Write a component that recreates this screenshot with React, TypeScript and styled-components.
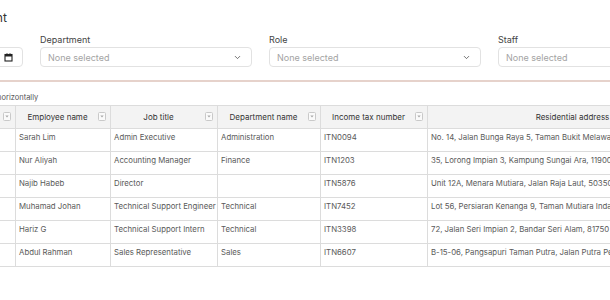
import React from 'react';
import styled, { createGlobalStyle } from 'styled-components';
import { ChevronDown } from 'lucide-react';

const GlobalStyle = createGlobalStyle`
  html, body {
    margin: 0;
    padding: 0;
    overflow: hidden;
    background: #fff;
  }
  body {
    font-family: Inter, "Noto Sans", sans-serif;
    color: #333;
  }
`;

type Employee = {
  no: number;
  id: string;
  name: string;
  title: string;
  department: string;
  taxNumber: string;
  address: string;
};

const employees: Employee[] = [
  {
    no: 1,
    id: 'EMP-0001',
    name: 'Sarah Lim',
    title: 'Admin Executive',
    department: 'Administration',
    taxNumber: 'ITN0094',
    address: 'No. 14, Jalan Bunga Raya 5, Taman Bukit Melawati, 45000 Kuala Selangor, Selangor',
  },
  {
    no: 2,
    id: 'EMP-0002',
    name: 'Nur Aliyah',
    title: 'Accounting Manager',
    department: 'Finance',
    taxNumber: 'ITN1203',
    address: '35, Lorong Impian 3, Kampung Sungai Ara, 11900 Bayan Lepas, Pulau Pinang',
  },
  {
    no: 3,
    id: 'EMP-0003',
    name: 'Najib Habeb',
    title: 'Director',
    department: '',
    taxNumber: 'ITN5876',
    address: 'Unit 12A, Menara Mutiara, Jalan Raja Laut, 50350 Kuala Lumpur',
  },
  {
    no: 4,
    id: 'EMP-0004',
    name: 'Muhamad Johan',
    title: 'Technical Support Engineer',
    department: 'Technical',
    taxNumber: 'ITN7452',
    address: 'Lot 56, Persiaran Kenanga 9, Taman Mutiara Indah, 31400 Ipoh, Perak',
  },
  {
    no: 5,
    id: 'EMP-0005',
    name: 'Hariz G',
    title: 'Technical Support Intern',
    department: 'Technical',
    taxNumber: 'ITN3398',
    address: '72, Jalan Seri Impian 2, Bandar Seri Alam, 81750 Masai, Johor',
  },
  {
    no: 6,
    id: 'EMP-0006',
    name: 'Abdul Rahman',
    title: 'Sales Representative',
    department: 'Sales',
    taxNumber: 'ITN6607',
    address: 'B-15-06, Pangsapuri Taman Putra, Jalan Putra Permai, 43300 Seri Kembangan',
  },
];

const columns = [
  { key: 'no', label: 'No.', width: 44 },
  { key: 'id', label: 'Employee ID', width: 160 },
  { key: 'name', label: 'Employee name', width: 95 },
  { key: 'title', label: 'Job title', width: 107 },
  { key: 'department', label: 'Department name', width: 103 },
  { key: 'taxNumber', label: 'Income tax number', width: 107 },
  { key: 'address', label: 'Residential address', width: 290 },
] as const;

function FilterIcon() {
  return (
    <svg width="8" height="9" viewBox="0 0 8 9">
      <rect x="0.5" y="0.5" width="7" height="8" rx="1" fill="#fafafa" stroke="#c9c9c9" />
      <path d="M2.3 3.4 L5.7 3.4 L4 5.4 Z" fill="#a9a9a9" />
    </svg>
  );
}

function CalendarIcon() {
  return (
    <svg width="9" height="9" viewBox="0 0 9 9">
      <rect x="1" y="1.5" width="7" height="6.5" fill="none" stroke="#222" strokeWidth="1.1" />
      <rect x="1" y="1.5" width="7" height="2" fill="#222" />
      <rect x="2.5" y="0.3" width="1" height="1.5" fill="#222" />
      <rect x="5.5" y="0.3" width="1" height="1.5" fill="#222" />
    </svg>
  );
}

export default function App() {
  return (
    <>
      <GlobalStyle />
      <Page>
        <Title>Employee Income Tax Assignment</Title>
        <Filters>
          <Field>
            <Label>Pay period</Label>
            <Input>
              <Placeholder>mm/yyyy</Placeholder>
              <CalendarIcon />
            </Input>
          </Field>
          <Field>
            <Label>Department</Label>
            <Input>
              <Placeholder>None selected</Placeholder>
              <ChevronDown size={9} color="#444" strokeWidth={2} />
            </Input>
          </Field>
          <Field>
            <Label>Role</Label>
            <Input>
              <Placeholder>None selected</Placeholder>
              <ChevronDown size={9} color="#444" strokeWidth={2} />
            </Input>
          </Field>
          <Field>
            <Label>Staff</Label>
            <Input>
              <Placeholder>None selected</Placeholder>
              <ChevronDown size={9} color="#444" strokeWidth={2} />
            </Input>
          </Field>
          <Field>
            <Label>Status</Label>
            <Input>
              <Placeholder>None selected</Placeholder>
              <ChevronDown size={9} color="#444" strokeWidth={2} />
            </Input>
          </Field>
        </Filters>
        <Hint>Showing 6 of 6 employees. Use shift+scroll to move horizontally</Hint>
        <Table>
          <colgroup>
            {columns.map((c) => (
              <col key={c.key} style={{ width: c.width }} />
            ))}
          </colgroup>
          <thead>
            <tr>
              {columns.map((c) => (
                <Th key={c.key} $filter={c.key !== 'address'}>
                  {c.label}
                  {c.key !== 'address' && (
                    <FilterSlot>
                      <FilterIcon />
                    </FilterSlot>
                  )}
                </Th>
              ))}
            </tr>
          </thead>
          <tbody>
            {employees.map((e) => (
              <tr key={e.id}>
                <Td>{e.no}</Td>
                <Td>{e.id}</Td>
                <Td>{e.name}</Td>
                <Td>{e.title}</Td>
                <Td>{e.department}</Td>
                <Td>{e.taxNumber}</Td>
                <Td>{e.address}</Td>
              </tr>
            ))}
          </tbody>
        </Table>
      </Page>
    </>
  );
}

const Page = styled.div`
  margin-left: -205px;
  padding: 9px 16px 8px;
  width: max-content;
`;

const Title = styled.h1`
  margin: 0 0 7px;
  font-size: 12.1px;
  line-height: 18px;
  font-weight: 400;
  color: #333;
`;

const Filters = styled.div`
  display: grid;
  grid-template-columns: repeat(5, 212px);
  column-gap: 17px;
  padding-bottom: 13px;
  border-bottom: 2px solid #e6d2cb;
`;

const Field = styled.div`
  display: flex;
  flex-direction: column;
  gap: 1px;
`;

const Label = styled.label`
  font-size: 9px;
  line-height: 12px;
  color: #444;
`;

const Input = styled.div`
  box-sizing: border-box;
  height: 20px;
  display: flex;
  align-items: center;
  justify-content: space-between;
  padding: 0 9px 0 7px;
  border: 1px solid #e2e2e2;
  border-radius: 4px;
  background: #fff;
`;

const Placeholder = styled.span`
  font-size: 9px;
  color: #a3a3a3;
`;

const Hint = styled.div`
  margin-top: 11px;
  margin-bottom: 2px;
  font-size: 7.5px;
  line-height: 10px;
  color: #555;
`;

const Table = styled.table`
  table-layout: fixed;
  border-collapse: collapse;
  width: 906px;
  border-top: 1px solid #dcdcdc;
  border-bottom: 1px solid #dcdcdc;
`;

const Th = styled.th<{ $filter: boolean }>`
  position: relative;
  box-sizing: border-box;
  height: 23px;
  padding: ${(p) => (p.$filter ? '0 11px 0 0' : '0')};
  background: #f3f3f3;
  border: 1px solid #dcdcdc;
  border-top: none;
  font-size: 8px;
  font-weight: 400;
  color: #333;
  text-align: center;
  white-space: nowrap;
  overflow: hidden;
`;

const FilterSlot = styled.span`
  position: absolute;
  right: 4px;
  top: 6px;
  display: flex;
`;

const Td = styled.td`
  box-sizing: border-box;
  height: 23px;
  padding: 3px 3px 0;
  vertical-align: top;
  border: 1px solid #dcdcdc;
  font-size: 7.8px;
  line-height: 11px;
  color: #5a5a5a;
  white-space: nowrap;
  overflow: hidden;
`;
